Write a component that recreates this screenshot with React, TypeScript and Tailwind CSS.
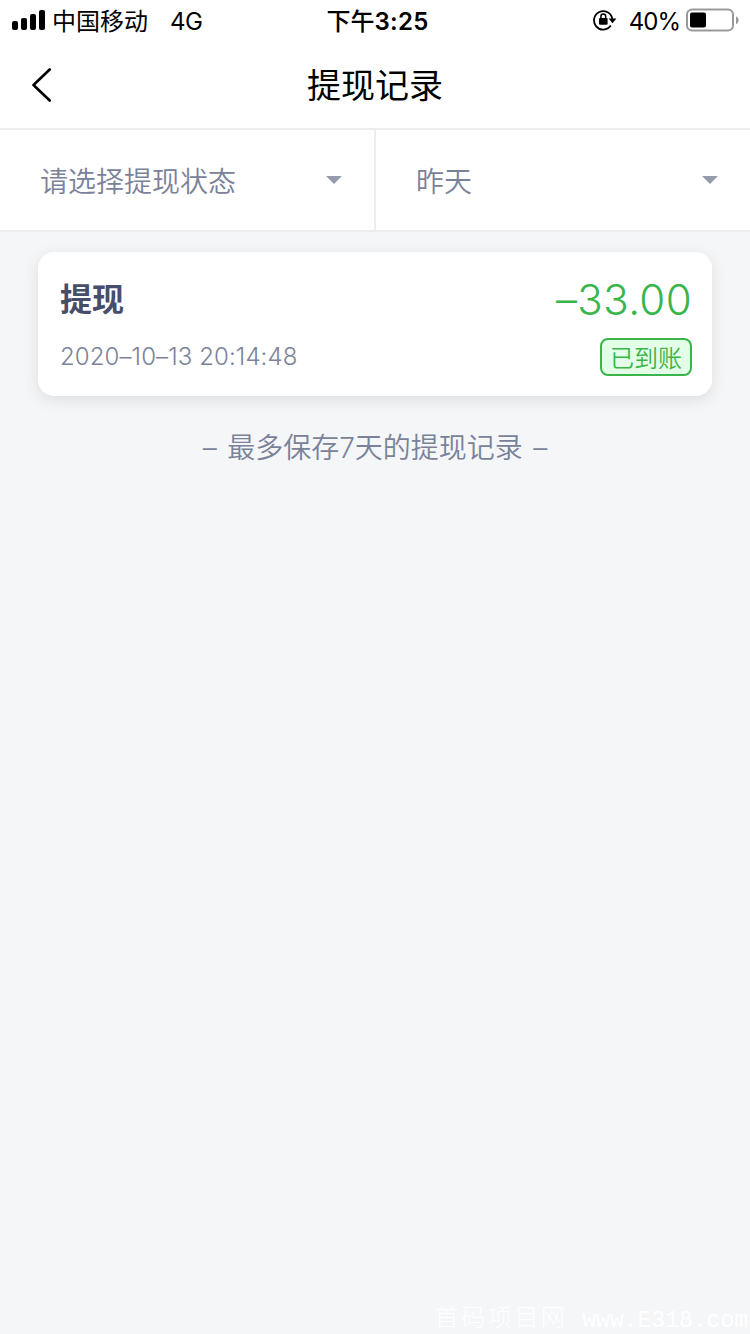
interface FilterProps {
  label: string;
}

interface WithdrawRecord {
  id: number;
  title: string;
  time: string;
  amount: string;
  status: string;
}

const records: WithdrawRecord[] = [
  { id: 1, title: "提现", time: "2020–10–13 20:14:48", amount: "–33.00", status: "已到账" },
];

const SignalIcon = () => (
  <svg width="34" height="20" viewBox="0 0 34 20" className="shrink-0">
    <rect x="0" y="11" width="6" height="9" rx="2" />
    <rect x="9" y="8" width="6" height="12" rx="2" />
    <rect x="18" y="4" width="6" height="16" rx="2" />
    <rect x="27" y="0" width="6" height="20" rx="2" />
  </svg>
);

const RotationLockIcon = () => (
  <svg width="24" height="22" viewBox="0 0 24 22" className="shrink-0">
    <path d="M17.8 16.6A9.2 9.2 0 1 1 19.3 10" fill="none" stroke="#000" strokeWidth="1.8" />
    <path d="M15.6 9.6h7.8l-3.9 4.6z" />
    <rect x="6" y="9" width="8.6" height="6.8" rx="1" />
    <path d="M7.900 9.600V7.400a2.400 2.400 0 0 1 4.800 0v2.200" fill="none" stroke="#000" strokeWidth="1.5" />
  </svg>
);

const BatteryIcon = () => (
  <svg width="54" height="24" viewBox="0 0 54 24" className="shrink-0">
    <rect x="1" y="1.5" width="46" height="21" rx="5" fill="none" stroke="#999" strokeWidth="2" />
    <rect x="4" y="4.5" width="16" height="15" rx="2" />
    <path d="M50 8.5c3.5 1 3.5 6.5 0 7.5z" fill="#999" />
  </svg>
);

const StatusBar = () => (
  <div className="grid h-10 grid-cols-3 items-center text-2xl text-black">
    <div className="flex items-center pl-3">
      <SignalIcon />
      <span className="ml-1.5 pt-[3px]">中国移动</span>
      <span className="ml-[22px] pt-[3px] tracking-[-0.5px]">4G</span>
    </div>
    <div className="pt-[3px] pl-[5px] text-center font-semibold tracking-[0.3px] whitespace-nowrap">
      <span className="font-medium tracking-normal">下午</span>3:25
    </div>
    <div className="flex items-center justify-end pr-[10px]">
      <RotationLockIcon />
      <span className="mr-1.5 ml-3 pt-[3px] tracking-[-1px]">40%</span>
      <BatteryIcon />
    </div>
  </div>
);

const NavBar = () => (
  <header className="grid h-[88px] grid-cols-[100px_1fr_100px] items-center">
    <button type="button" aria-label="返回" className="pl-[31px]">
      <svg width="22" height="36" viewBox="0 0 22 36" fill="none" stroke="#000" strokeWidth="2.6" strokeLinecap="round" strokeLinejoin="round">
        <path d="M18.7 3.5 2.5 19 18.7 34.5" />
      </svg>
    </button>
    <h1 className="pt-1 text-center text-[34px] leading-none text-black">提现记录</h1>
  </header>
);

const Filter = ({ label }: FilterProps) => (
  <button type="button" className="flex items-center justify-between pr-8 pl-10 text-left text-[28px] text-[#7a8299]">
    <span className="pt-[3px] font-[350]">{label}</span>
    <svg width="16" height="8" viewBox="0 0 16 8" fill="#959bad">
      <path d="M0 0h16L8 8z" />
    </svg>
  </button>
);

const RecordCard = ({ record }: { record: WithdrawRecord }) => (
  <li className="flex h-36 justify-between rounded-2xl bg-white pr-5 pl-[22px] shadow-[0_4px_16px_rgba(0,0,0,0.1)]">
    <div className="flex flex-col pt-6">
      <h2 className="h-12 text-[32px] leading-[48px] font-bold text-[#464e69]">{record.title}</h2>
      <time className="mt-[15px] text-2xl leading-[36px] font-[350] tracking-[0.1px] text-[#7a8299]">{record.time}</time>
    </div>
    <div className="flex flex-col items-end pt-6">
      <div className="h-12 text-[42px] leading-[48px] font-[350] tracking-[0.4px] text-[#39b54a]">{record.amount}</div>
      <span className="mt-[14px] flex h-[38px] w-[92px] items-center justify-center rounded-lg border-2 border-[#39b54a] bg-[#e3ffe7] pt-[3px] text-2xl leading-none font-[350] text-[#39b54a]">
        {record.status}
      </span>
    </div>
  </li>
);

export default function App() {
  return (
    <div className="flex h-[1334px] w-[750px] flex-col overflow-hidden bg-[#f4f6f8] font-[Inter,'Noto_Sans_CJK_SC',sans-serif]">
      <div className="bg-white">
        <StatusBar />
        <NavBar />
        <div className="grid h-[104px] grid-cols-[376px_1fr] border-y-2 border-[#ededed]">
          <div className="grid border-r-2 border-[#ededed]">
            <Filter label="请选择提现状态" />
          </div>
          <Filter label="昨天" />
        </div>
      </div>
      <main className="flex-1 px-[38px] pt-5">
        <ul>
          {records.map((record) => (
            <RecordCard key={record.id} record={record} />
          ))}
        </ul>
        <p className="mt-[31px] text-center text-[28px] leading-[42px] font-[350] text-[#7a8299] [word-spacing:2.5px]">
          – 最多保存7天的提现记录 –
        </p>
      </main>
      <footer className="flex h-9 items-center justify-end gap-[15px] pr-0.5 leading-none whitespace-nowrap text-white">
        <span className="font-['Noto_Sans_CJK_SC',sans-serif] text-[24px] leading-9 font-light tracking-[2.500px]">首码项目网</span>
        <span className="pt-2.5 font-['Liberation_Mono',monospace] text-[23px]">www.E318.com</span>
      </footer>
    </div>
  );
}
